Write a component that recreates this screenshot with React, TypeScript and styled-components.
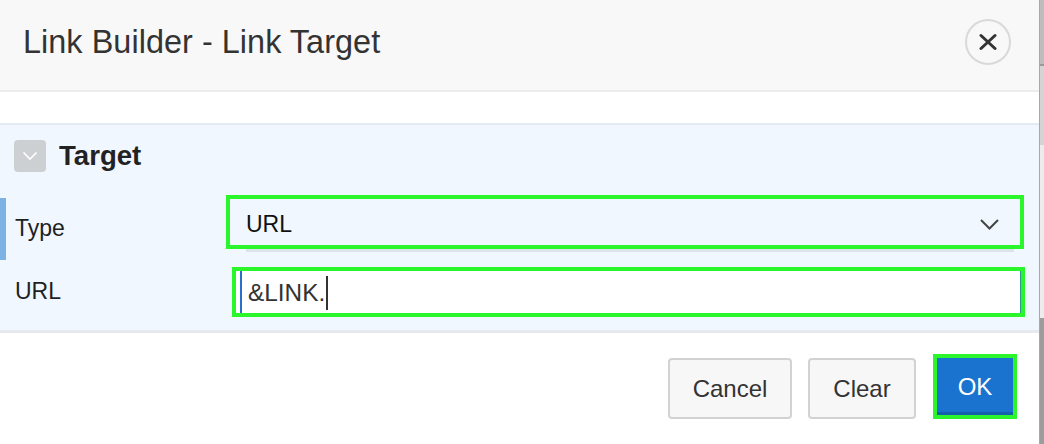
import React from "react";
import styled, { createGlobalStyle } from "styled-components";

const Global = createGlobalStyle`
  html, body { margin: 0; padding: 0; background: #ffffff; }
  body { font-family: "Liberation Sans", Arial, sans-serif; }
  * { box-sizing: border-box; }
`;

const Page = styled.div`
  width: 1044px;
  height: 444px;
  display: flex;
  overflow: hidden;
`;

const Dialog = styled.div`
  width: 1039px;
  display: flex;
  flex-direction: column;
  background: #ffffff;
`;

const Edge = styled.div`
  width: 5px;
  display: flex;
  flex-direction: column;
  border-left: 1px solid #a8a8a8;
`;

const EdgePart = styled.div<{ $h: number; $c: string }>`
  height: ${(p) => p.$h}px;
  background: ${(p) => p.$c};
  flex: ${(p) => (p.$h === 0 ? 1 : "none")};
`;

const Header = styled.div`
  height: 92px;
  flex: none;
  display: flex;
  align-items: center;
  justify-content: space-between;
  padding: 0 28px 6px 23px;
  background: #f8f8f8;
  border-bottom: 2px solid #ececec;
`;

const Title = styled.h1`
  margin: 0;
  font-size: 32.4px;
  font-weight: 400;
  color: #333333;
  letter-spacing: 0.05px;
`;

const CloseButton = styled.button`
  width: 46px;
  height: 46px;
  border-radius: 50%;
  border: 2px solid #d9d9d9;
  background: transparent;
  display: flex;
  align-items: center;
  justify-content: center;
  padding: 0;
`;

const Spacer = styled.div`
  height: 31px;
  flex: none;
`;

const Region = styled.section`
  flex: none;
  background: #f1f7fe;
  border-top: 2px solid #e4eaf2;
  border-bottom: 3px solid #e6e9ee;
  padding: 15px 0 17px;
`;

const RegionHeader = styled.div`
  display: flex;
  align-items: center;
  gap: 13px;
  padding-left: 14px;
  height: 32px;
`;

const Toggle = styled.button`
  width: 32px;
  height: 32px;
  border: none;
  border-radius: 4px;
  background: #cdd0d3;
  display: flex;
  align-items: center;
  justify-content: center;
  padding: 0;
`;

const RegionTitle = styled.h2`
  margin: 0;
  font-size: 27.6px;
  font-weight: 700;
  color: #222222;
`;

const Fields = styled.div`
  margin-top: 26px;
  display: flex;
  flex-direction: column;
  gap: 11px;
`;

const Row = styled.div<{ $active?: boolean; $h: number }>`
  display: grid;
  grid-template-columns: 224px 1fr;
  height: ${(p) => p.$h}px;
  padding-right: 19px;
  border-left: 6px solid ${(p) => (p.$active ? "#7db2e5" : "transparent")};
`;

const Label = styled.label<{ $top: number }>`
  padding: ${(p) => p.$top}px 0 0 9px;
  font-size: 23px;
  color: #1f1f1f;
  line-height: 26px;
`;

const Highlight = "#2bf52b";

const Select = styled.div`
  position: relative;
  height: 46px;
  margin-top: 1px;
  display: flex;
  align-items: center;
  justify-content: space-between;
  padding: 5px 21px 0 16px;
  box-shadow: 0 0 0 4px ${Highlight};
  font-size: 23px;
  color: #111111;
  &::after {
    content: "";
    position: absolute;
    left: 16px;
    right: 6px;
    bottom: -7px;
    height: 3px;
    background: #dde3ea;
  }
`;

const InputBox = styled.div`
  height: 42px;
  margin-left: 6px;
  margin-right: -1px;
  display: flex;
  align-items: stretch;
  background: #ffffff;
  box-shadow: 0 0 0 4px ${Highlight};
  border-right: 1px solid #2a9b8a;
  padding-left: 4px;
`;

const InputField = styled.div`
  flex: 1;
  display: flex;
  align-items: center;
  border-left: 2px solid #2a6fcb;
  padding: 2px 0 0 6px;
  font-size: 24.4px;
  color: #333333;
`;

const Caret = styled.span`
  display: inline-block;
  width: 2px;
  height: 34px;
  margin-left: 1px;
  background: #333333;
`;

const Footer = styled.div`
  flex: 1;
  display: flex;
  justify-content: flex-end;
  align-items: flex-start;
  padding: 25px 26px 0 0;
  gap: 16px;
`;

const Button = styled.button<{ $hot?: boolean; $w: number }>`
  width: ${(p) => p.$w}px;
  height: ${(p) => (p.$hot ? 57 : 61)}px;
  margin-left: ${(p) => (p.$hot ? 5 : 0)}px;
  border-radius: ${(p) => (p.$hot ? 0 : 4)}px;
  font-family: "Liberation Sans", Arial, sans-serif;
  font-size: 24px;
  padding: ${(p) => (p.$hot ? "3px 0 0" : "0")};
  color: ${(p) => (p.$hot ? "#ffffff" : "#333333")};
  background: ${(p) => (p.$hot ? "#1a74cf" : "#f7f7f7")};
  border: ${(p) => (p.$hot ? "none" : "2px solid #d2d2d2")};
  border-bottom: ${(p) => (p.$hot ? "3px solid #1560ad" : "2px solid #d2d2d2")};
  box-shadow: ${(p) => (p.$hot ? `0 0 0 4px ${Highlight}` : "none")};
`;

export default function App() {
  return (
    <>
      <Global />
      <Page>
        <Dialog>
          <Header>
            <Title>Link Builder - Link Target</Title>
            <CloseButton aria-label="Close">
              <svg width="18" height="18" viewBox="0 0 18 18">
                <path d="M2 2.5L16 15.5M16 2.5L2 15.5" stroke="#333" strokeWidth="3" strokeLinecap="round" />
              </svg>
            </CloseButton>
          </Header>
          <Spacer />
          <Region>
            <RegionHeader>
              <Toggle aria-label="Collapse">
                <svg width="16" height="10" viewBox="0 0 16 10">
                  <path d="M1.5 1.5L8 8L14.5 1.5" stroke="#ffffff" strokeWidth="1.6" fill="none" />
                </svg>
              </Toggle>
              <RegionTitle>Target</RegionTitle>
            </RegionHeader>
            <Fields>
              <Row $active $h={62}>
                <Label $top={17}>Type</Label>
                <Select>
                  <span>URL</span>
                  <svg width="19" height="11" viewBox="0 0 19 11">
                    <path d="M1 1L9.5 9.5L18 1" stroke="#444" strokeWidth="2" fill="none" />
                  </svg>
                </Select>
              </Row>
              <Row $h={42}>
                <Label $top={7}>URL</Label>
                <InputBox>
                  <InputField>
                    &amp;LINK.
                    <Caret />
                  </InputField>
                </InputBox>
              </Row>
            </Fields>
          </Region>
          <Footer>
            <Button $w={124}>Cancel</Button>
            <Button $w={108}>Clear</Button>
            <Button $hot $w={76}>OK</Button>
          </Footer>
        </Dialog>
        <Edge>
          <EdgePart $h={64} $c="#bdbdbd" />
          <EdgePart $h={2} $c="#999999" />
          <EdgePart $h={79} $c="#d4d4d4" />
          <EdgePart $h={173} $c="#ececec" />
          <EdgePart $h={0} $c="#9c9c9c" />
        </Edge>
      </Page>
    </>
  );
}
